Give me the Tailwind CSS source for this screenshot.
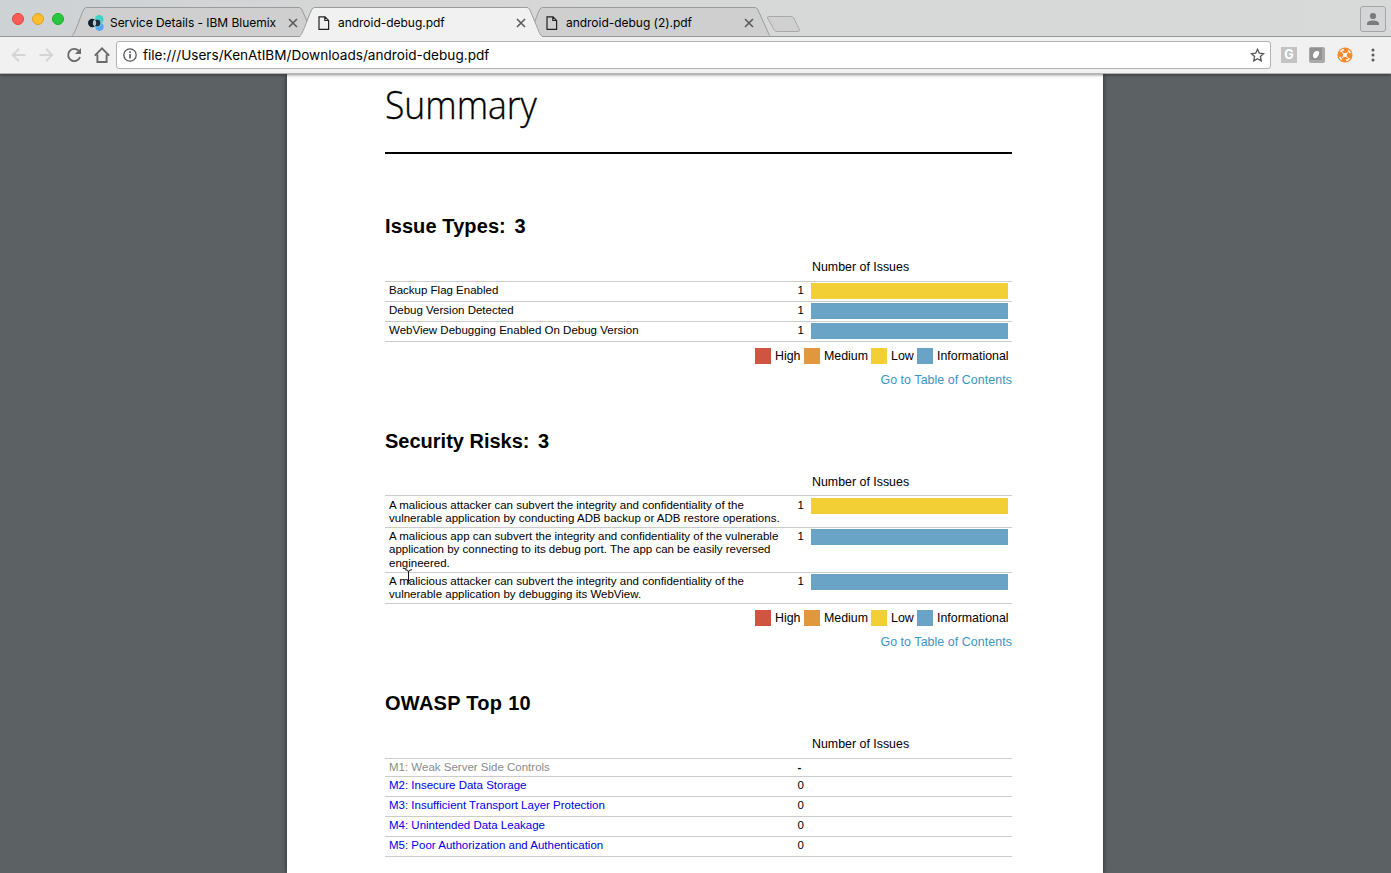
<!DOCTYPE html>
<html lang="en">
<head>
<meta charset="utf-8">
<title>android-debug.pdf</title>
<script src="https://cdn.jsdelivr.net/npm/@tailwindcss/browser@4"></script>
</head>
<body class="w-[1391px] h-[873px] overflow-hidden flex flex-col bg-[#5c6164] text-black font-['Liberation_Sans',Arial,sans-serif]">

<!-- Tab strip -->
<header class="h-[37px] shrink-0 flex items-end bg-linear-to-r from-[#cdd2d5] via-[#d6d6d6] via-25% to-[#d8dada] border-b border-[#999b9c] font-[Inter,sans-serif]">
  <div class="flex items-center gap-2 w-[72px] h-[36px] pl-3 pt-0.5 shrink-0">
    <span class="size-3 rounded-full bg-[#fc5b57] border border-[#e2463f]"></span>
    <span class="size-3 rounded-full bg-[#fdbc2f] border border-[#e0a028]"></span>
    <span class="size-3 rounded-full bg-[#27c840] border border-[#1eac2c]"></span>
  </div>

  <div class="relative w-[242px] h-[29px] shrink-0 flex items-center pl-4 pr-4 pt-[2px]">
    <svg class="absolute left-0 top-0" width="242" height="29" viewBox="0 0 242 29" fill="#cfcfcf" stroke="#999b9c"><path d="M0.5 28.5C4 24 8 10 11.5 3Q12.5 .5 14.500 .5H227Q229 .5 230 3L241.500 28.500"/></svg>
    <svg class="relative" width="16" height="16" viewBox="0 0 16 16"><circle cx="11.200" cy="4.400" r="4.300" fill="#38d6c0"/><circle cx="11.500" cy="11.800" r="4.100" fill="#55a3fb"/><circle cx="9" cy="8" r="4" fill="#1b3140" stroke="#6fd6e4" stroke-width="1.200"/><circle cx="4.200" cy="8" r="4.200" fill="#14212f"/><path d="M6.500 4.600a4.200 4.200 0 0 1 0 6.800a4.200 4.200 0 0 1 0-6.800" fill="#b9c9d2"/></svg>
    <span class="relative ml-1.5 text-[12px] leading-4 tracking-[-0.04px] whitespace-nowrap">Service Details - IBM Bluemix</span>
    <svg class="relative ml-auto" width="10" height="10" viewBox="0 0 10 10" stroke="#5a5a5a" stroke-width="1.600"><path d="M1 1l8 8M9 1l-8 8"/></svg>
  </div>

  <div class="relative z-20 w-[242px] h-[30px] -mb-px -ml-[14px] shrink-0 flex items-center pl-[18px] pr-4 pt-px">
    <svg class="absolute left-0 top-0" width="242" height="30" viewBox="0 0 242 30" fill="#f1f1f1" stroke="#999b9c"><path stroke="none" d="M0 30L13 .5H229L242 30z"/><path fill="none" d="M0.500 28.500C4 24 8 10 11.500 3Q12.500 .5 14.500 .5H227Q229 .5 230 3L239.500 26Q240.500 28.500 242 28.500"/></svg>
    <svg class="relative" width="12" height="14" viewBox="0 0 12 14" fill="none" stroke="#222" stroke-width="1.200"><path d="M1 .8H7L10.600 4.400V13.300H1zM6.800 .8V4.500H10.600"/></svg>
    <span class="relative ml-2 text-[12px] leading-4 tracking-[-0.03px] whitespace-nowrap">android-debug.pdf</span>
    <svg class="relative ml-auto" width="10" height="10" viewBox="0 0 10 10" stroke="#5a5a5a" stroke-width="1.600"><path d="M1 1l8 8M9 1l-8 8"/></svg>
  </div>

  <div class="relative w-[242px] h-[29px] -ml-[14px] shrink-0 flex items-center pl-[18px] pr-4 pt-[2px]">
    <svg class="absolute left-0 top-0" width="242" height="29" viewBox="0 0 242 29" fill="#cfcfcf" stroke="#999b9c"><path d="M0.500 28.500C4 24 8 10 11.500 3Q12.500 .5 14.500 .5H227Q229 .5 230 3L241.500 28.500"/></svg>
    <svg class="relative" width="12" height="14" viewBox="0 0 12 14" fill="none" stroke="#222" stroke-width="1.200"><path d="M1 .8H7L10.600 4.400V13.300H1zM6.800 .8V4.500H10.600"/></svg>
    <span class="relative ml-2 text-[12px] leading-4 tracking-[-0.03px] whitespace-nowrap">android-debug (2).pdf</span>
    <svg class="relative ml-auto" width="10" height="10" viewBox="0 0 10 10" stroke="#5a5a5a" stroke-width="1.600"><path d="M1 1l8 8M9 1l-8 8"/></svg>
  </div>

  <svg class="-ml-1 mb-[3px] shrink-0" width="35" height="18" viewBox="0 0 35 18" fill="#d0d0d0" stroke="#a9a9a9"><path d="M3 1.500H25Q27 1.500 28 3.500L33.300 14.500Q34 16.500 32 16.500H11Q9 16.500 8 14.500L1.500 3Q1 1.500 3 1.500z"/></svg>

  <div class="ml-auto mr-[5px] mb-1 w-[26px] h-[26px] rounded-[3px] border border-[#a3a5a6] bg-[#d4d5d6] flex items-center justify-center">
    <svg width="14" height="14" viewBox="0 0 14 14" fill="#7b7b7b"><circle cx="7" cy="4" r="3.100"/><path d="M1 13V11.500C1 9.500 4 8.500 7 8.500S13 9.500 13 11.500V13z"/></svg>
  </div>
</header>

<!-- Toolbar -->
<nav class="relative z-10 h-[36px] shrink-0 flex items-center bg-[#f1f1f1] pl-[11px] font-[Inter,sans-serif] shadow-[0_1px_0_#b4b4b4,0_2px_3px_rgba(0,0,0,0.45)]">
  <svg width="15" height="14" viewBox="0 0 15 14" fill="none" stroke="#d5d5d5" stroke-width="1.900"><path d="M14.500 7H1.500M8 .8L1.700 7L8 13.200"/></svg>
  <svg class="ml-[13px]" width="15" height="14" viewBox="0 0 15 14" fill="none" stroke="#d5d5d5" stroke-width="1.900"><path d="M.5 7H13.500M7 .8L13.300 7L7 13.200"/></svg>
  <svg class="ml-3" width="16" height="16" viewBox="0 0 16 16"><path d="M12.600 3.700A6.100 6.100 0 1 0 14 10" fill="none" stroke="#6a6a6a" stroke-width="1.900"/><path d="M15 .9V7H8.900z" fill="#6a6a6a"/></svg>
  <svg class="ml-3" width="16" height="16" viewBox="0 0 16 16" fill="none" stroke="#6a6a6a" stroke-width="1.900"><path d="M.8 8.700L8 1.400L15.200 8.700M3.400 7.500V15H12.600V7.500"/></svg>
  <div class="ml-[6px] w-[1155px] h-[28px] bg-white border border-[#b3b3b3] rounded-[3px] flex items-center pl-[6px] pr-[5px]">
    <svg width="14" height="14" viewBox="0 0 14 14" fill="none" stroke="#555"><circle cx="7" cy="7" r="6.200" stroke-width="1.300"/><path d="M7 6v4.500M7 3.300v1.600" stroke-width="1.600"/></svg>
    <span class="ml-[6px] text-[13.6px] leading-5 whitespace-nowrap">file:///Users/KenAtIBM/Downloads/android-debug.pdf</span>
    <svg class="ml-auto" width="15" height="14" viewBox="0 0 15 14" fill="none" stroke="#555" stroke-width="1.300"><path d="M7.500 1.300L9.300 5.200L13.600 5.700L10.400 8.600L11.300 12.900L7.500 10.700L3.700 12.900L4.600 8.600L1.400 5.700L5.700 5.200z"/></svg>
  </div>
  <div class="ml-[10px] size-4 bg-[#c3c3c3] text-white font-bold text-[12.5px] leading-4 text-center">G</div>
  <svg class="ml-3" width="16" height="16" viewBox="0 0 16 16"><rect width="16" height="16" rx="2" fill="#a9a9a9"/><rect x="1" y="1" width="12" height="12" rx="1" fill="#929292"/><path d="M5.200 11C3 9.500 4 5.500 6.600 4.300C8.800 3.400 11.200 4.500 10 7C9 9 8 12 5.200 11z" fill="#fff"/></svg>
  <svg class="ml-3" width="16" height="16" viewBox="0 0 16 16"><circle cx="8" cy="8" r="7.600" fill="#f98a2c"/><circle cx="8" cy="8" r="2" fill="#fff"/><path d="M5.300 5.300l1.300 1.300M10.700 5.300L9.400 6.600M5.300 10.700l1.300-1.300M10.700 10.700L9.400 9.400" stroke="#fff" stroke-width="1.100"/><path d="M6.800 2.600A5.600 5.600 0 0 0 3.400 4.900M11 3.300A5.600 5.600 0 0 1 13.300 6.300M9.200 13.400A5.600 5.600 0 0 0 12.600 11.100M5 12.700A5.600 5.600 0 0 1 2.700 9.700" fill="none" stroke="#fff" stroke-width="1.600"/></svg>
  <svg class="ml-[18px]" width="4" height="14" viewBox="0 0 4 14" fill="#5a5a5a"><circle cx="2" cy="2" r="1.500"/><circle cx="2" cy="7" r="1.500"/><circle cx="2" cy="12" r="1.500"/></svg>
</nav>

<!-- PDF page -->
<main class="w-[816px] h-[800px] ml-[287px] shrink-0 bg-white pl-[98px] pr-[91px] pt-px shadow-[0_0_5px_rgba(0,0,0,0.6)]">
  <h1 class="h-[80px] pt-[5px] border-b-2 border-black font-light text-[39px] leading-[50px] font-['Open_Sans',sans-serif]"><span class="inline-block origin-left scale-x-[0.91] [-webkit-text-stroke:0.35px_#000]">Summary</span></h1>

  <section class="h-[235px] pt-[58px] flex flex-col">
    <h2 class="h-7 text-[20px] leading-7 font-bold whitespace-pre"><span class="tracking-[0.1px]">Issue Types:</span> <span class="ml-[3px]">3</span></h2>
    <p class="mt-[19px] h-[22px] pl-[427px] text-[12.4px] leading-4">Number of Issues</p>
    <div class="border-t border-[#ccc] text-[11.5px] leading-[17px]">
      <div class="h-5 flex border-b border-[#ccc] pl-1"><span class="w-[408.5px]">Backup Flag Enabled</span><span class="w-[13.5px]">1</span><i class="mt-px w-[197px] h-4 bg-[#f2cf35]"></i></div>
      <div class="h-5 flex border-b border-[#ccc] pl-1"><span class="w-[408.5px]">Debug Version Detected</span><span class="w-[13.5px]">1</span><i class="mt-px w-[197px] h-4 bg-[#69a4c6]"></i></div>
      <div class="h-5 flex border-b border-[#ccc] pl-1"><span class="w-[408.5px]">WebView Debugging Enabled On Debug Version</span><span class="w-[13.5px]">1</span><i class="mt-px w-[197px] h-4 bg-[#69a4c6]"></i></div>
    </div>
    <div class="mt-[6px] h-4 flex justify-end pr-[3px] text-[12.4px] leading-4">
      <i class="size-4 bg-[#cf5542]"></i><span class="ml-1 w-[25px]">High</span>
      <i class="size-4 ml-1 bg-[#e1973d]"></i><span class="ml-1 w-[44px]">Medium</span>
      <i class="size-4 ml-[3px] bg-[#f2cf35]"></i><span class="ml-1 w-[23px]">Low</span>
      <i class="size-4 ml-[3px] bg-[#69a4c6]"></i><span class="ml-1 w-[72px]">Informational</span>
    </div>
    <p class="mt-2 text-right text-[12.4px] leading-4 tracking-[0.07px] text-[#3d94bf]">Go to Table of Contents</p>
  </section>

  <section class="h-[262px] pt-[38px] flex flex-col">
    <h2 class="h-7 text-[20px] leading-7 font-bold whitespace-pre">Security Risks: <span class="ml-[3px]">3</span></h2>
    <p class="mt-[19px] h-[21px] pl-[427px] text-[12.4px] leading-4">Number of Issues</p>
    <div class="border-t border-[#ccc] text-[11.5px] leading-[13.3px]">
      <div class="h-8 flex border-b border-[#ccc] pl-1 pt-[3px]"><span class="w-[408.5px] whitespace-nowrap">A malicious attacker can subvert the integrity and confidentiality of the<br>vulnerable application by conducting ADB backup or ADB restore operations.</span><span class="w-[13.5px]">1</span><i class="-mt-px w-[197px] h-4 bg-[#f2cf35]"></i></div>
      <div class="h-[45px] flex border-b border-[#ccc] pl-1 pt-[2px]"><span class="w-[408.5px] whitespace-nowrap">A malicious app can subvert the integrity and confidentiality of the vulnerable<br>application by connecting to its debug port. The app can be easily reversed<br>engineered.</span><span class="w-[13.5px]">1</span><i class="-mt-px w-[197px] h-4 bg-[#69a4c6]"></i></div>
      <div class="h-[31px] flex border-b border-[#ccc] pl-1 pt-[2px]"><span class="w-[408.5px] whitespace-nowrap">A malicious attacker can subvert the integrity and confidentiality of the<br>vulnerable application by debugging its WebView.</span><span class="w-[13.5px]">1</span><i class="-mt-px w-[197px] h-4 bg-[#69a4c6]"></i></div>
    </div>
    <div class="mt-[6px] h-4 flex justify-end pr-[3px] text-[12.4px] leading-4">
      <i class="size-4 bg-[#cf5542]"></i><span class="ml-1 w-[25px]">High</span>
      <i class="size-4 ml-1 bg-[#e1973d]"></i><span class="ml-1 w-[44px]">Medium</span>
      <i class="size-4 ml-[3px] bg-[#f2cf35]"></i><span class="ml-1 w-[23px]">Low</span>
      <i class="size-4 ml-[3px] bg-[#69a4c6]"></i><span class="ml-1 w-[72px]">Informational</span>
    </div>
    <p class="mt-2 text-right text-[12.4px] leading-4 tracking-[0.07px] text-[#3d94bf]">Go to Table of Contents</p>
  </section>

  <section class="pt-[38px] flex flex-col">
    <h2 class="h-7 text-[20px] leading-7 font-bold tracking-[0.28px]">OWASP Top 10</h2>
    <p class="mt-[19px] h-[22px] pl-[427px] text-[12.4px] leading-4">Number of Issues</p>
    <div class="border-t border-[#ccc] text-[11.5px] leading-[17px] text-[#0000e6]">
      <div class="h-[18px] flex border-b border-[#ccc] pl-1 text-[#8c8c8c]"><span class="w-[408.5px]">M1: Weak Server Side Controls</span><span class="font-bold text-black">-</span></div>
      <div class="h-5 flex border-b border-[#ccc] pl-1"><span class="w-[408.5px]">M2: Insecure Data Storage</span><span class="text-black">0</span></div>
      <div class="h-5 flex border-b border-[#ccc] pl-1"><span class="w-[408.5px]">M3: Insufficient Transport Layer Protection</span><span class="text-black">0</span></div>
      <div class="h-5 flex border-b border-[#ccc] pl-1"><span class="w-[408.5px]">M4: Unintended Data Leakage</span><span class="text-black">0</span></div>
      <div class="h-5 flex border-b border-[#ccc] pl-1"><span class="w-[408.5px]">M5: Poor Authorization and Authentication</span><span class="text-black">0</span></div>
    </div>
  </section>
</main>

<!-- Text cursor -->
<svg class="absolute left-[404px] top-[569px]" width="9" height="17" viewBox="0 0 9 17" fill="none" stroke="#111" stroke-width="1"><path d="M1 .7Q4.500 .7 4.500 3V14.500M8 .7Q4.500 .7 4.500 3M3 11.500H6"/></svg>
</body>
</html>
